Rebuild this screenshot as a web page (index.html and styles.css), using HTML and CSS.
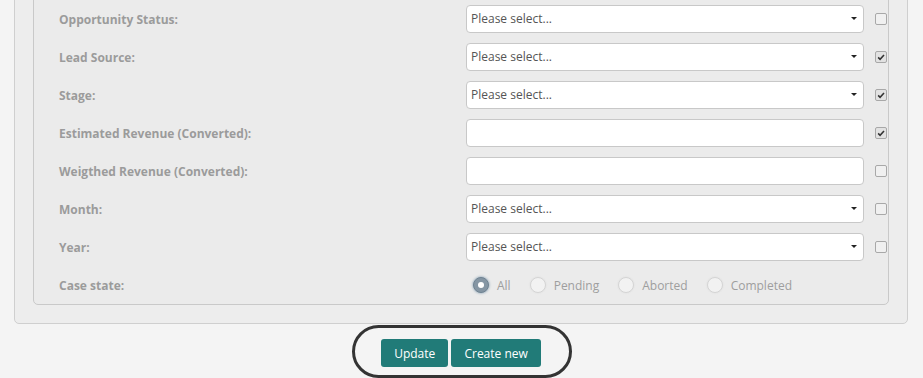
FILE: index.html
```html
<!DOCTYPE html>
<html lang="en">
<head>
    <meta charset="UTF-8">
    <title>Opportunity Filter</title>
    <link rel="stylesheet" href="styles.css">
</head>
<body>

<div class="panel">
    <div class="filter-box">

        <!-- Opportunity Status -->
        <div class="filter-row">
            <label>Opportunity Status:</label>
            <div class="select-box">Please select...<span class="caret"></span></div>
            <span class="check"></span>
        </div>

        <!-- Lead Source -->
        <div class="filter-row">
            <label>Lead Source:</label>
            <div class="select-box">Please select...<span class="caret"></span></div>
            <span class="check checked"><svg viewBox="0 0 12 12" width="12" height="12"><path d="M2.6 6.4 L4.9 8.7 L9.6 3.6" fill="none" stroke="#333" stroke-width="1.9"/></svg></span>
        </div>

        <!-- Stage -->
        <div class="filter-row">
            <label>Stage:</label>
            <div class="select-box">Please select...<span class="caret"></span></div>
            <span class="check checked"><svg viewBox="0 0 12 12" width="12" height="12"><path d="M2.6 6.4 L4.9 8.7 L9.6 3.6" fill="none" stroke="#333" stroke-width="1.9"/></svg></span>
        </div>

        <!-- Estimated Revenue -->
        <div class="filter-row">
            <label>Estimated Revenue (Converted):</label>
            <div class="text-box"></div>
            <span class="check checked"><svg viewBox="0 0 12 12" width="12" height="12"><path d="M2.6 6.4 L4.9 8.7 L9.6 3.6" fill="none" stroke="#333" stroke-width="1.9"/></svg></span>
        </div>

        <!-- Weigthed Revenue -->
        <div class="filter-row">
            <label>Weigthed Revenue (Converted):</label>
            <div class="text-box"></div>
            <span class="check"></span>
        </div>

        <!-- Month -->
        <div class="filter-row">
            <label>Month:</label>
            <div class="select-box">Please select...<span class="caret"></span></div>
            <span class="check"></span>
        </div>

        <!-- Year -->
        <div class="filter-row">
            <label>Year:</label>
            <div class="select-box">Please select...<span class="caret"></span></div>
            <span class="check"></span>
        </div>

        <!-- Case state -->
        <div class="filter-row">
            <label>Case state:</label>
            <div class="radio-group">
                <span class="radio-item"><span class="radio selected"></span>All</span>
                <span class="radio-item"><span class="radio"></span>Pending</span>
                <span class="radio-item"><span class="radio"></span>Aborted</span>
                <span class="radio-item"><span class="radio"></span>Completed</span>
            </div>
        </div>

    </div>
</div>

<div class="actions">
    <div class="button-ring">
        <button class="btn">Update</button>
        <button class="btn">Create new</button>
    </div>
</div>

</body>
</html>
```

FILE: styles.css
```css
* {
    box-sizing: border-box;
    margin: 0;
    padding: 0;
}

body {
    background: #f4f4f4;
    font-family: 'Open Sans', sans-serif;
    font-size: 12px;
    overflow: hidden;
}

.panel {
    margin: -40px 15px 0 14px;
    background: #ededed;
    border: 1px solid #cfcfcf;
    border-radius: 5px;
    padding: 17px 18px 18px 18px;
}

.filter-box {
    background: #ebebeb;
    border: 1px solid #c9c9c9;
    border-radius: 5px;
    padding: 26px 1px 5px 25px;
    display: grid;
    row-gap: 10px;
}

.filter-row {
    display: grid;
    grid-template-columns: 396px 398px 12px;
    column-gap: 11px;
    align-items: center;
    height: 28px;
}

.filter-row label {
    font-weight: bold;
    color: #9b9b9b;
}

.select-box, .text-box {
    height: 28px;
    background: #fff;
    border: 1px solid #c8c8c8;
    border-radius: 4px;
    padding: 0 4px;
    line-height: 26px;
    color: #555;
    position: relative;
}

.caret {
    position: absolute;
    right: 6px;
    top: 11px;
    border-left: 3px solid transparent;
    border-right: 3px solid transparent;
    border-top: 3px solid #222;
}

.check {
    width: 12px;
    height: 12px;
    border: 1px solid #a8a8a8;
    border-radius: 2px;
    background: #f0f0f0;
    display: flex;
    align-items: center;
    justify-content: center;
}

.check.checked {
    background: #e2e2e2;
}

.check svg {
    display: block;
}

.radio-group {
    display: flex;
    align-items: center;
    padding-left: 7px;
    color: #9e9e9e;
    grid-column: 2 / 4;
}

.radio-item {
    display: flex;
    align-items: center;
    margin-right: 19px;
}

.radio {
    width: 16px;
    height: 16px;
    border-radius: 50%;
    border: 1px solid #d4d4d4;
    background: #f2f2f2;
    box-shadow: 0 0 1px 1px #e6e6e6;
    margin-right: 8px;
}

.radio.selected {
    background: #8596a4;
    border-color: #6f8291;
    box-shadow: 0 0 2px 1px #b3c1cc;
    position: relative;
}

.radio.selected::after {
    content: "";
    position: absolute;
    left: 4px;
    top: 4px;
    width: 6px;
    height: 6px;
    border-radius: 50%;
    background: #fff;
}

.actions {
    text-align: center;
    margin-top: 1px;
}

.button-ring {
    display: inline-block;
    border: 3px solid #333;
    border-radius: 28px;
    padding: 11px 28px 8px 26px;
    margin-left: 1px;
}

.btn {
    font-family: 'Open Sans', sans-serif;
    font-size: 12px;
    color: #fff;
    background: #217b78;
    border: none;
    border-radius: 3px;
    height: 28px;
    padding: 0 13px;
    cursor: pointer;
}
```
